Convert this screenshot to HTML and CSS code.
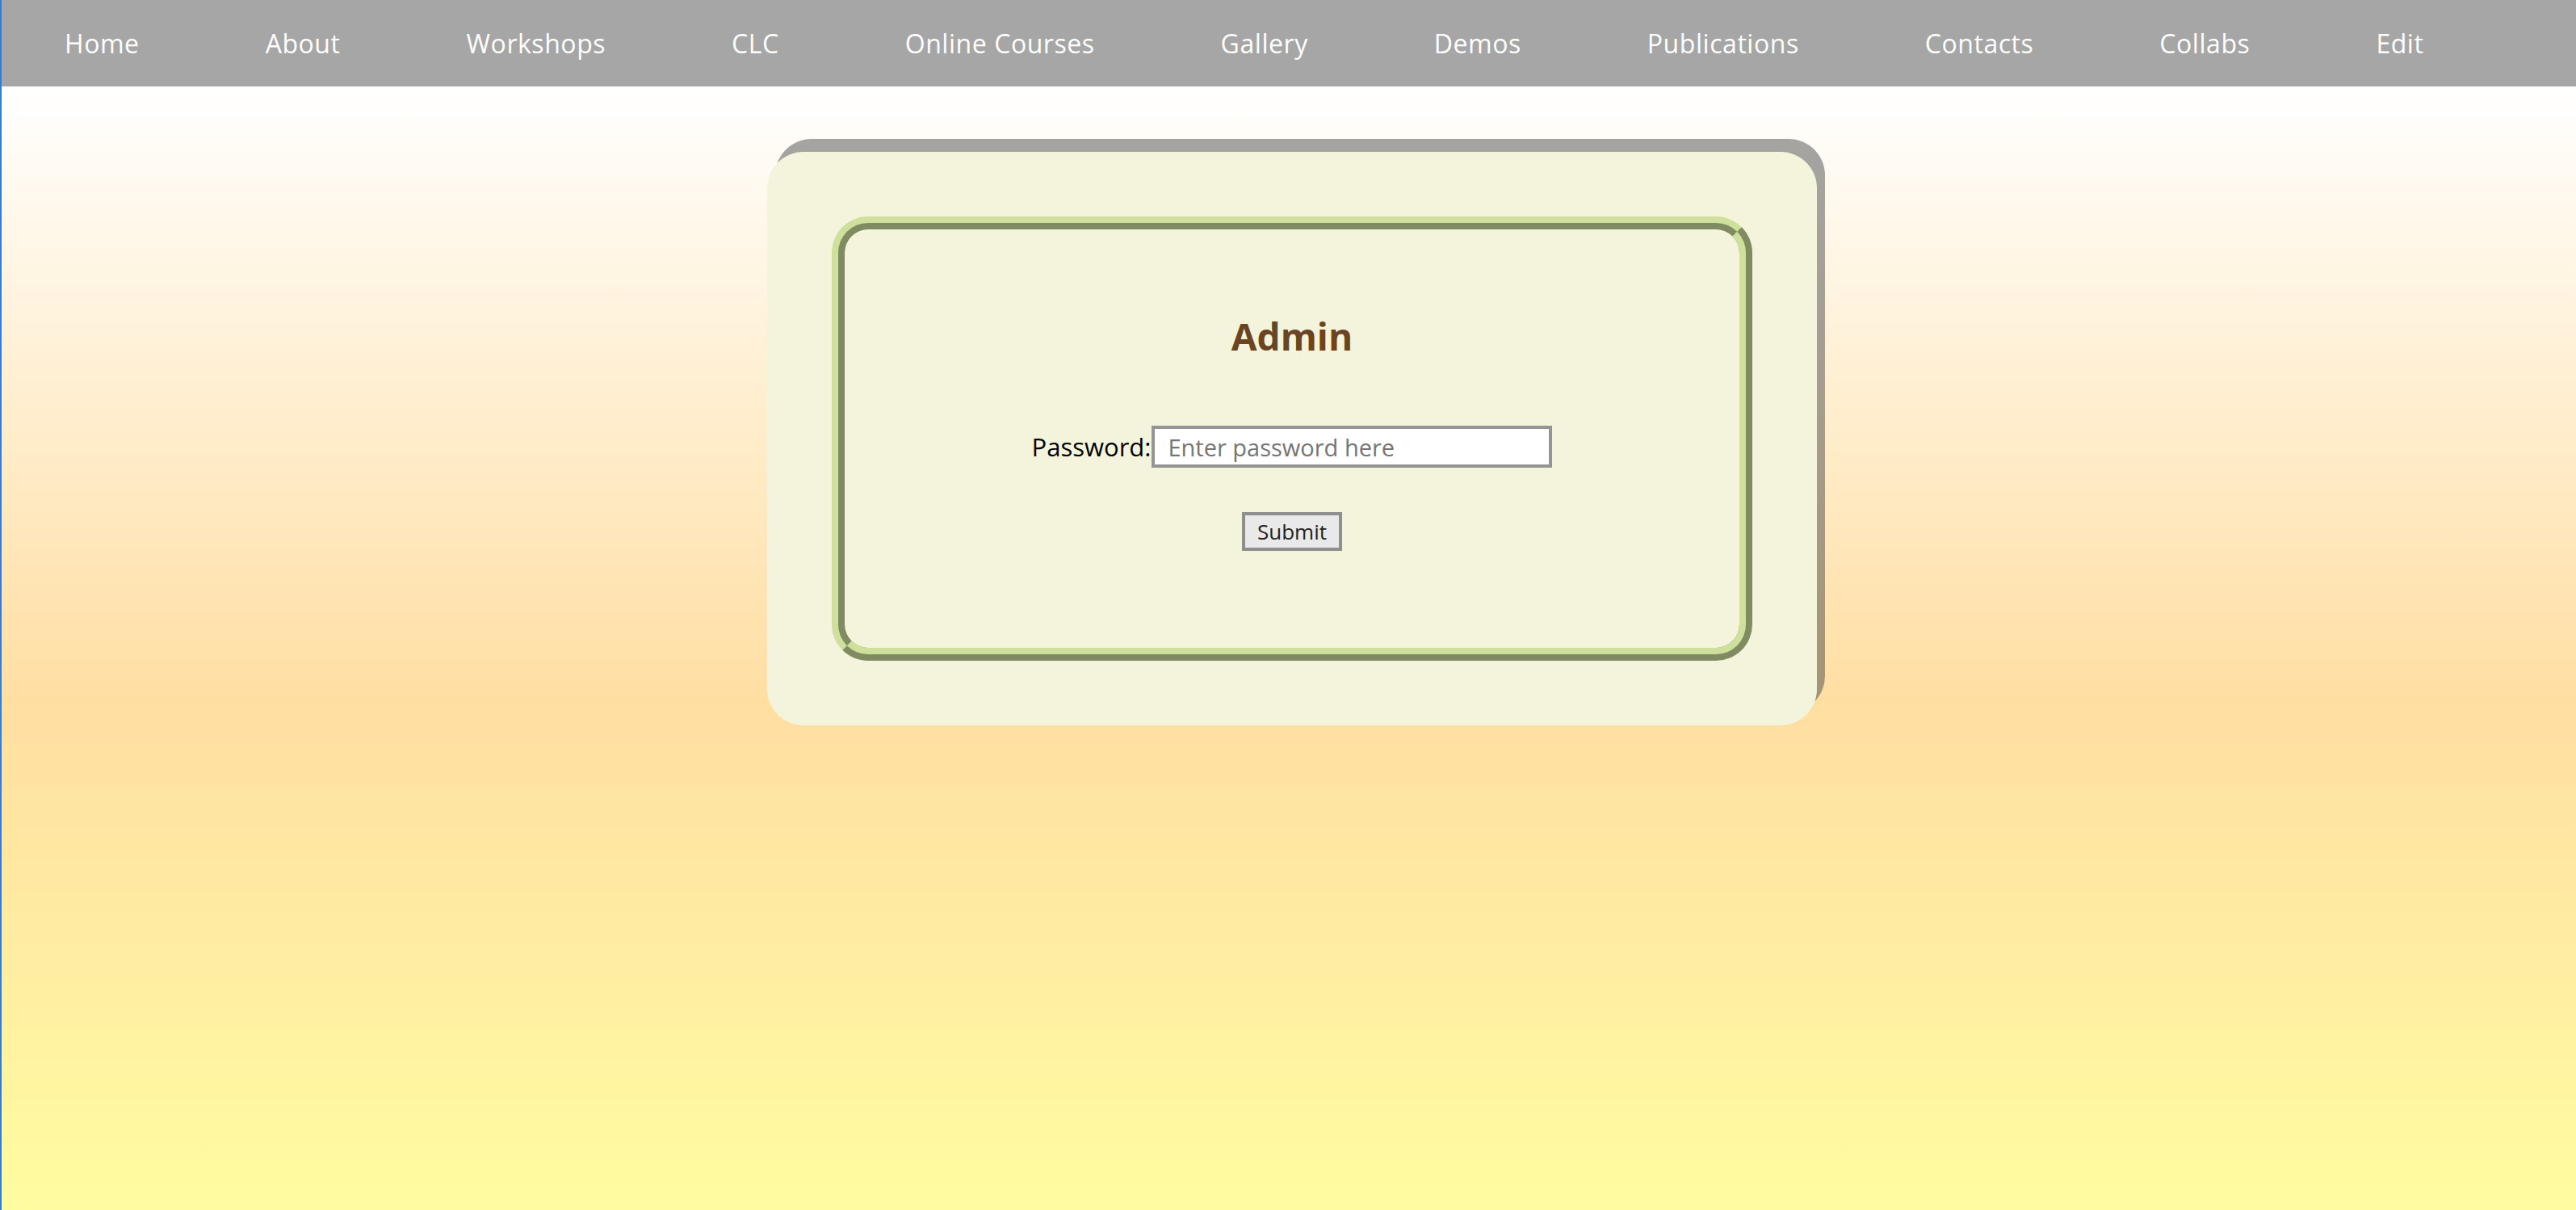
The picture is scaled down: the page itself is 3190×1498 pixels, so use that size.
FILE: index.html
```html
<!DOCTYPE html>
<html lang="en">
<head>
<meta charset="utf-8">
<title>Admin</title>
<link rel="stylesheet" href="styles.css">
</head>
<body>
<nav class="topnav">
  <ul class="topnav-list">
    <li><a href="#">Home</a></li>
    <li><a href="#">About</a></li>
    <li><a href="#">Workshops</a></li>
    <li><a href="#">CLC</a></li>
    <li><a href="#">Online Courses</a></li>
    <li><a href="#">Gallery</a></li>
    <li><a href="#">Demos</a></li>
    <li><a href="#">Publications</a></li>
    <li><a href="#">Contacts</a></li>
    <li><a href="#">Collabs</a></li>
    <li><a href="#">Edit</a></li>
  </ul>
</nav>
<main class="page">
  <section class="card">
    <div class="panel">
      <h2 class="panel-title">Admin</h2>
      <form class="login-form">
        <div class="field-row">
          <label class="field-label" for="pw">Password:</label><input class="field-input" id="pw" type="password" placeholder="Enter password here">
        </div>
        <button class="submit-btn" type="button">Submit</button>
      </form>
    </div>
  </section>
</main>
</body>
</html>
```
FILE: styles.css
```css
html {
  margin: 0;
  padding: 0;
}

body {
  margin: 0;
  min-height: 100vh;
  border-left: 2px solid #2f7de0;
  font-family: "Open Sans", "Noto Sans", "DejaVu Sans", sans-serif;
  background: linear-gradient(to bottom, #ffffff 7%, #ffdea2 58%, #fffca0 100%);
}

.topnav {
  background: #a6a6a6;
}

.topnav-list {
  display: flex;
  margin: 0;
  padding: 0;
  list-style: none;
  height: 107px;
}

.topnav-list a {
  display: block;
  padding: 0 78px;
  line-height: 107px;
  font-size: 32px;
  letter-spacing: 0.55px;
  color: #ffffff;
  text-decoration: none;
}

.page {
  padding: 81px 0 0 8px;
}

.card {
  box-sizing: border-box;
  width: 1300px;
  margin: 0 auto;
  padding: 80px;
  background: #f4f4dc;
  border-radius: 45px;
  box-shadow: 10px -16px 0 rgba(75, 75, 75, 0.5);
}

.panel {
  box-sizing: border-box;
  height: 550px;
  border: 16px ridge #cfdf9c;
  border-radius: 45px;
  display: flex;
  flex-direction: column;
  align-items: center;
  padding-top: 104px;
}

.panel-title {
  margin: 0;
  font-size: 46px;
  line-height: 57px;
  font-weight: 700;
  color: #6b4423;
}

.login-form {
  display: flex;
  flex-direction: column;
  align-items: center;
  margin-top: 82px;
}

.field-row {
  display: flex;
  align-items: center;
}

.field-label {
  font-size: 31px;
  color: #000000;
  margin-right: 1px;
}

.field-input {
  box-sizing: border-box;
  width: 496px;
  height: 52px;
  border: 4px solid #959595;
  padding: 0 16px;
  font-family: inherit;
  font-size: 29px;
  background: #ffffff;
  outline: none;
}

.field-input::placeholder {
  color: #757575;
}

.submit-btn {
  box-sizing: border-box;
  margin-top: 55px;
  width: 124px;
  height: 48px;
  border: 4px solid #8f8f8f;
  background: #e9e9e9;
  font-family: inherit;
  font-size: 26px;
  color: #222222;
  padding: 0;
}
```
